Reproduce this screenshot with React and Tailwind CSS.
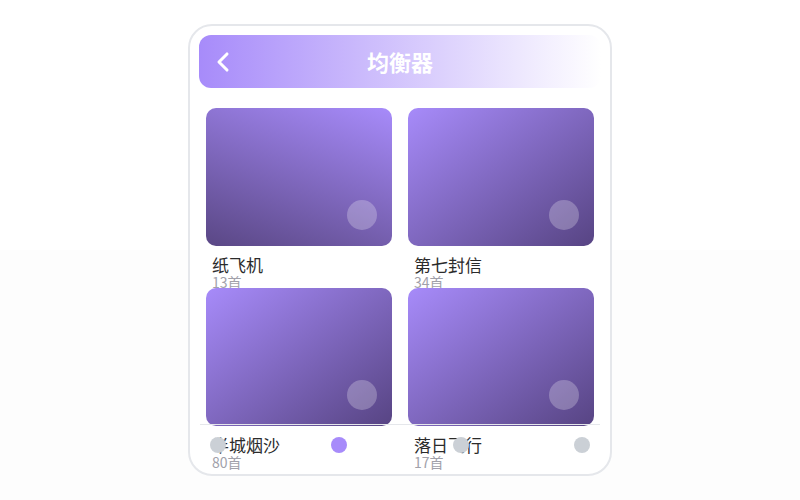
import { ChevronLeft } from "lucide-react";

const albums = [
  { title: "纸飞机", count: "13首", dir: "bg-[linear-gradient(200deg,#a78bfa,#5a4785)]" },
  { title: "第七封信", count: "34首", dir: "bg-[linear-gradient(to_bottom_right,#a78bfa,#574483)]" },
  { title: "半城烟沙", count: "80首", dir: "bg-[linear-gradient(to_bottom_right,#a78bfa,#574483)]" },
  { title: "落日飞行", count: "17首", dir: "bg-[linear-gradient(to_bottom_right,#a78bfa,#574483)]" },
];

function AlbumCard({ title, count, dir }) {
  return (
    <div className="h-[180px]">
      <div className={`relative h-[138px] rounded-[10px] ${dir}`}>
        <div className="absolute right-[15px] bottom-[16px] h-[30px] w-[30px] rounded-full bg-white/25" />
      </div>
      <div className="mt-[10px] px-[6px]">
        <div className="text-[17px] leading-[18px] text-[#2b2b2b]">{title}</div>
        <div className="text-[14px] leading-[16px] text-[#a1a1aa]">{count}</div>
      </div>
    </div>
  );
}

export default function App() {
  return (
    <div
      className="flex h-screen w-full items-center justify-center bg-[linear-gradient(to_bottom,#ffffff_50%,#fdfdfd_50%)]"
      style={{ fontFamily: '"Noto Sans CJK SC", "Noto Sans", sans-serif' }}
    >
      <div className="relative h-[452px] w-[424px] overflow-hidden rounded-[24px] border-2 border-[#e5e7eb] bg-white">
        {/* Header */}
        <div className="mx-[9px] mt-[9px] flex h-[53px] items-center rounded-[12px] bg-[linear-gradient(to_right,#a78bfa,#ffffff)] px-[8px]">
          <ChevronLeft className="h-[32px] w-[32px] text-white" strokeWidth={2.3} />
          <div className="flex-1 pr-[32px] text-center text-[22px] font-bold text-white">均衡器</div>
        </div>

        {/* Album grid */}
        <div className="mt-[20px] grid grid-cols-2 gap-x-[16px] px-[16px]">
          {albums.map((a) => (
            <AlbumCard key={a.title} {...a} />
          ))}
        </div>

        {/* Bottom tab bar */}
        <div className="absolute right-[10px] bottom-0 left-[10px] flex h-[50px] justify-between border-t border-[#e5e7eb] px-[10px] pt-[12px]">
          <div className="h-[16px] w-[16px] rounded-full bg-[#cbd0d6]" />
          <div className="h-[16px] w-[16px] rounded-full bg-[#a78bfa]" />
          <div className="h-[16px] w-[16px] rounded-full bg-[#cbd0d6]" />
          <div className="h-[16px] w-[16px] rounded-full bg-[#cbd0d6]" />
        </div>
      </div>
    </div>
  );
}
